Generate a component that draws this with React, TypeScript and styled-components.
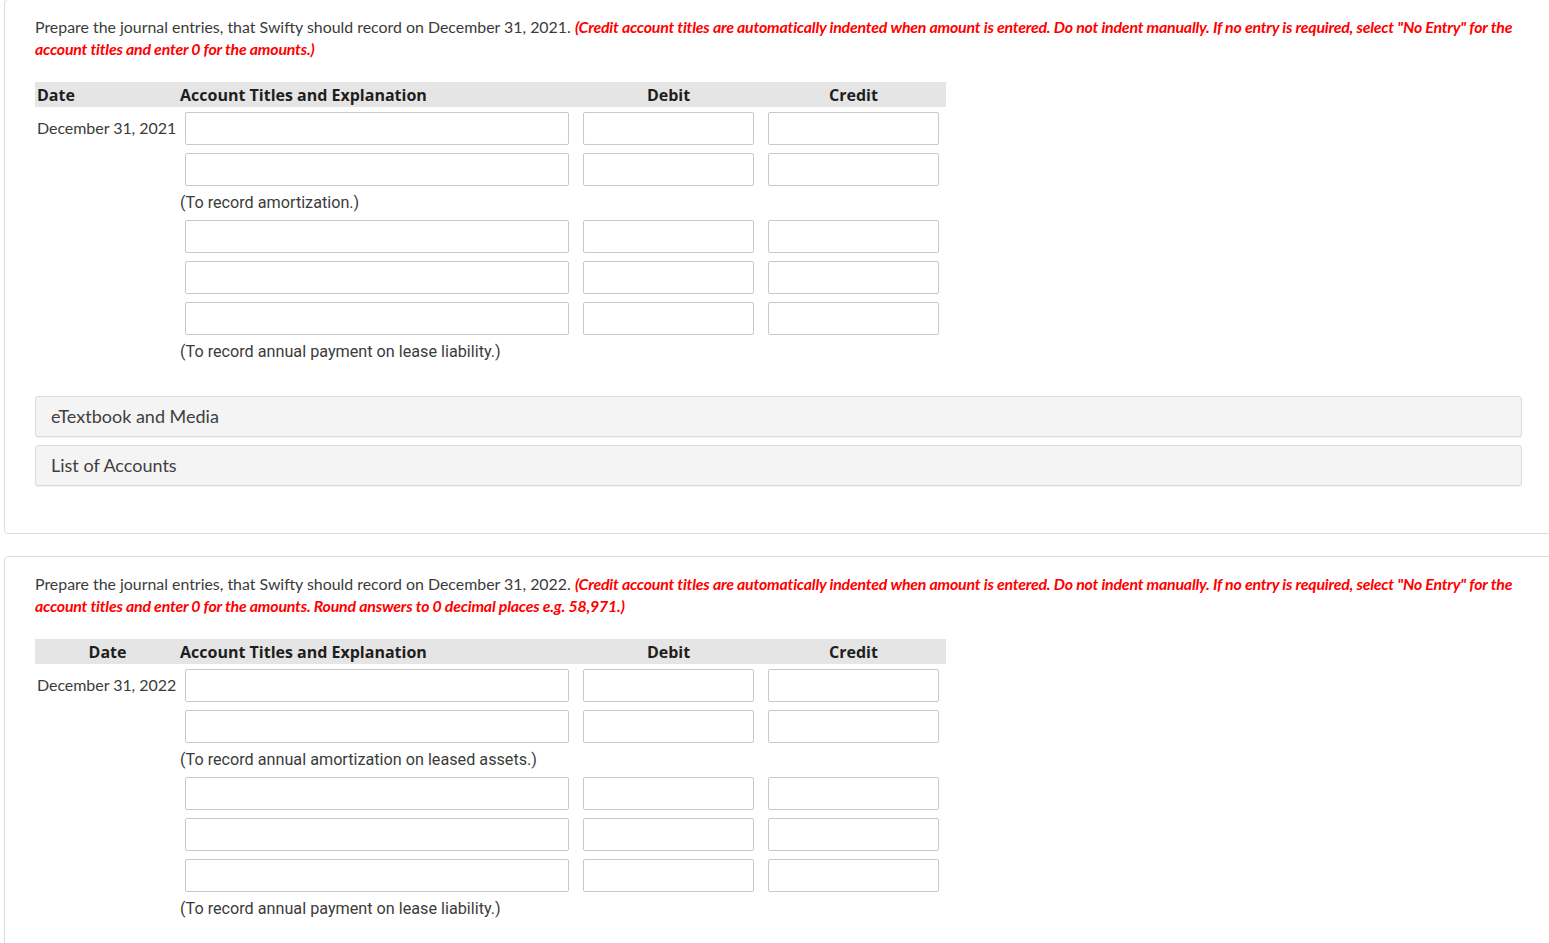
import React from 'react';
import styled, { createGlobalStyle } from 'styled-components';

interface Entry {
  rows: number;
  note: string;
}

interface Question {
  date: string;
  centerDate: boolean;
  extra?: string;
  entries: Entry[];
  accordions: boolean;
}

const questions: Question[] = [
  {
    date: 'December 31, 2021',
    centerDate: false,
    entries: [
      { rows: 2, note: '(To record amortization.)' },
      { rows: 3, note: '(To record annual payment on lease liability.)' },
    ],
    accordions: true,
  },
  {
    date: 'December 31, 2022',
    centerDate: true,
    extra: ' Round answers to 0 decimal places e.g. 58,971.',
    entries: [
      { rows: 2, note: '(To record annual amortization on leased assets.)' },
      { rows: 3, note: '(To record annual payment on lease liability.)' },
    ],
    accordions: false,
  },
];

const GlobalStyle = createGlobalStyle`
  html, body {
    margin: 0;
    padding: 0;
    background: #fff;
    overflow: hidden;
  }
  body {
    font-family: Lato, 'Liberation Sans', sans-serif;
    color: #3b3b3b;
  }
`;

const Page = styled.div`
  display: flex;
  flex-direction: column;
  gap: 22px;
  margin-top: -1px;
`;

const Card = styled.section`
  box-sizing: border-box;
  width: 1549px;
  margin-left: 4px;
  border: 1px solid #dcdcdc;
  border-radius: 4px;
  padding: 16px 30px 47px 30px;
`;

const Prompt = styled.p`
  margin: 0 0 22px;
  font-size: 15.9px;
  line-height: 22px;
  color: #3b3b3b;
`;

const Hint = styled.em`
  color: #ff0000;
  font-weight: 700;
  font-style: italic;
  letter-spacing: -0.2px;
`;

const Grid = styled.div`
  display: grid;
  grid-template-columns: 145px 396px 185px 185px;
  width: 911px;
`;

const HeadCell = styled.div<{ align: 'left' | 'center'; pad?: number }>`
  background: #e5e5e5;
  height: 25px;
  line-height: 26px;
  font-family: 'Open Sans', 'Liberation Sans', sans-serif;
  font-weight: 700;
  font-size: 16px;
  color: #1e1e1e;
  text-align: ${({ align }) => align};
  padding-left: ${({ pad }) => pad ?? 0}px;
  margin-bottom: 5px;
`;

const DateCell = styled.div<{ short?: boolean }>`
  font-size: 16px;
  line-height: ${({ short }) => (short ? 18 : 31)}px;
  padding-left: 2px;
  color: #3b3b3b;
  white-space: nowrap;
  letter-spacing: -0.05px;
`;

const InputCell = styled.div<{ left: number; right: number }>`
  padding: 0 ${({ right }) => right}px 8px ${({ left }) => left}px;
`;

const Field = styled.input`
  box-sizing: border-box;
  display: block;
  width: 100%;
  height: 33px;
  border: 1px solid #c8c8c8;
  border-radius: 2px;
  background: #fff;
  margin: 0;
  padding: 0 6px;
`;

const Note = styled.div`
  grid-column: 2 / 5;
  font-family: Roboto, 'Liberation Sans', sans-serif;
  font-size: 16.2px;
  line-height: 18px;
  color: #3b3b3b;
  margin-bottom: 8px;
`;

const Accordions = styled.div`
  display: flex;
  flex-direction: column;
  gap: 8px;
  margin-top: 27px;
`;

const Panel = styled.div`
  box-sizing: border-box;
  height: 41px;
  line-height: 39px;
  padding-left: 15px;
  background: #f4f4f4;
  border: 1px solid #dcdcdc;
  border-radius: 3px;
  box-shadow: 0 1px 1px rgba(0, 0, 0, 0.06);
  font-size: 18px;
  color: #3f3f3f;
`;

const JournalTable: React.FC<{ q: Question }> = ({ q }) => (
  <Grid>
    <HeadCell align={q.centerDate ? 'center' : 'left'} pad={q.centerDate ? 0 : 2}>
      Date
    </HeadCell>
    <HeadCell align="left">Account Titles and Explanation</HeadCell>
    <HeadCell align="center">Debit</HeadCell>
    <HeadCell align="center">Credit</HeadCell>
    {q.entries.map((entry, ei) => (
      <React.Fragment key={ei}>
        {Array.from({ length: entry.rows }).map((_, ri) => (
          <React.Fragment key={ri}>
            <DateCell>{ei === 0 && ri === 0 ? q.date : ''}</DateCell>
            <InputCell left={5} right={7}>
              <Field type="text" />
            </InputCell>
            <InputCell left={7} right={7}>
              <Field type="text" />
            </InputCell>
            <InputCell left={7} right={7}>
              <Field type="text" />
            </InputCell>
          </React.Fragment>
        ))}
        <DateCell short />
        <Note>{entry.note}</Note>
      </React.Fragment>
    ))}
  </Grid>
);

const App: React.FC = () => (
  <Page>
    <GlobalStyle />
    {questions.map((q) => (
      <Card key={q.date}>
        <Prompt>
          Prepare the journal entries, that Swifty should record on {q.date}.{' '}
          <Hint>
            (Credit account titles are automatically indented when amount is entered. Do not
            indent manually. If no entry is required, select "No Entry" for the account titles
            and enter 0 for the amounts.{q.extra})
          </Hint>
        </Prompt>
        <JournalTable q={q} />
        {q.accordions && (
          <Accordions>
            <Panel>eTextbook and Media</Panel>
            <Panel>List of Accounts</Panel>
          </Accordions>
        )}
      </Card>
    ))}
  </Page>
);

export default App;
